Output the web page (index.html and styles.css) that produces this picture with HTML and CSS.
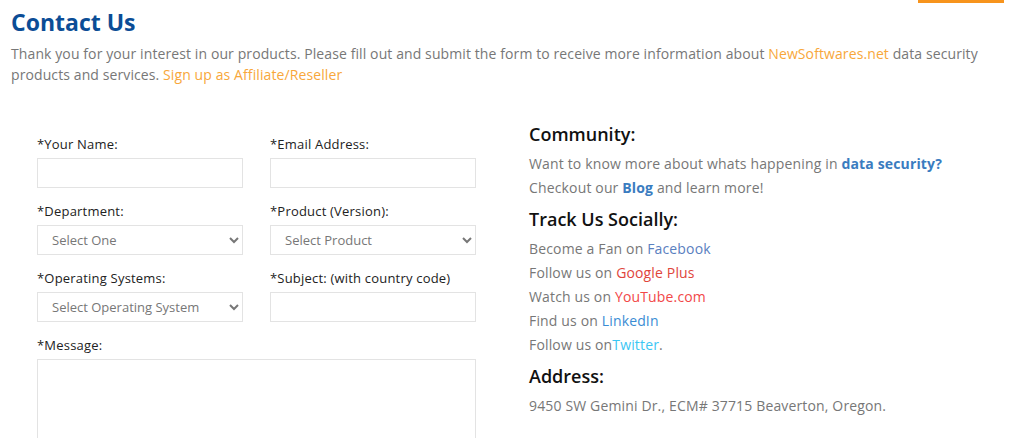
FILE: index.html
```html
<!DOCTYPE html>
<html lang="en">
<head>
<meta charset="utf-8">
<title>Contact Us</title>
<link rel="stylesheet" href="styles.css">
</head>
<body>
<div class="accent-bar"></div>
<div class="page">
  <h1 class="title">Contact Us</h1>
  <p class="intro"><span>Thank you for your interest in our products. Please fill out and submit the form to receive more information about </span><a class="orange" href="#">NewSoftwares.net</a><span> data security</span><br><span>products and services. </span><a class="orange" href="#">Sign up as Affiliate/Reseller</a></p>

  <div class="main">
    <form class="form">
      <div class="field">
        <label class="label">*Your Name:</label>
        <input class="control" type="text">
      </div>
      <div class="field">
        <label class="label">*Email Address:</label>
        <input class="control" type="text">
      </div>
      <div class="field">
        <label class="label">*Department:</label>
        <select class="control select"><option>Select One</option></select>
      </div>
      <div class="field">
        <label class="label">*Product (Version):</label>
        <select class="control select"><option>Select Product</option></select>
      </div>
      <div class="field">
        <label class="label">*Operating Systems:</label>
        <select class="control select"><option>Select Operating System</option></select>
      </div>
      <div class="field">
        <label class="label">*Subject: (with country code)</label>
        <input class="control" type="text">
      </div>
      <div class="field wide">
        <label class="label">*Message:</label>
        <textarea class="control area"></textarea>
      </div>
    </form>

    <aside class="side">
      <h3 class="side-title">Community:</h3>
      <p class="line">Want to know more about whats happening in <a class="strong-link" href="#">data security?</a></p>
      <p class="line">Checkout our <a class="strong-link" href="#">Blog</a> and learn more!</p>

      <h3 class="side-title gap">Track Us Socially:</h3>
      <p class="line">Become a Fan on <a class="fb" href="#">Facebook</a></p>
      <p class="line">Follow us on <a class="gp" href="#">Google Plus</a></p>
      <p class="line">Watch us on <a class="yt" href="#">YouTube.com</a></p>
      <p class="line">Find us on <a class="li" href="#">LinkedIn</a></p>
      <p class="line">Follow us on<a class="tw" href="#">Twitter</a>.</p>

      <h3 class="side-title gap">Address:</h3>
      <p class="line">9450 SW Gemini Dr., ECM# 37715 Beaverton, Oregon.</p>
    </aside>
  </div>
</div>
</body>
</html>
```

FILE: styles.css
```css
* { box-sizing: border-box; }

html, body {
  margin: 0;
  background: #fff;
  font-family: "Open Sans", "DejaVu Sans", sans-serif;
  overflow: hidden;
}

.accent-bar {
  position: absolute;
  top: 0;
  left: 918px;
  width: 86px;
  height: 3px;
  background: #f7941d;
}

.page {
  padding: 0 11px;
}

.title {
  margin: 0;
  padding-top: 6px;
  font-size: 23px;
  line-height: 32px;
  font-weight: 700;
  color: #0b4d96;
}

.intro {
  margin: 5px 0 0;
  font-size: 14px;
  line-height: 21px;
  letter-spacing: 0.1px;
  color: #777;
}

a { text-decoration: none; }

.orange { color: #f8a73a; }

.main {
  display: grid;
  grid-template-columns: 439px 1fr;
  column-gap: 53px;
  margin-top: 36px;
  padding-left: 26px;
  align-items: start;
}

.form {
  display: grid;
  grid-template-columns: 206px 206px;
  column-gap: 27px;
  row-gap: 13px;
  padding-top: 13px;
}

.field { display: flex; flex-direction: column; }
.field.wide { grid-column: 1 / 3; }

.label {
  font-size: 13px;
  line-height: 20px;
  letter-spacing: 0.2px;
  color: #222;
  margin-bottom: 4px;
}

.control {
  height: 30px;
  width: 100%;
  border: 1px solid #e3e3e3;
  background: #fff;
  font-family: inherit;
  font-size: 13px;
  color: #777;
  border-radius: 0;
  outline: none;
}

.select {
  padding: 0 10px;
}

.area {
  height: 120px;
  resize: none;
}

.side-title {
  margin: 0 0 5px;
  font-size: 18px;
  line-height: 26px;
  font-weight: 600;
  color: #111;
}

.side-title.gap { margin-top: 6px; }

.line {
  margin: 0;
  font-size: 14px;
  line-height: 24px;
  letter-spacing: 0.15px;
  color: #777;
}

.strong-link { color: #3a7cc0; font-weight: 700; }
.fb { color: #5a80c0; }
.gp { color: #e0453c; }
.yt { color: #f24848; }
.li { color: #3a8cd4; }
.tw { color: #3cc6f4; }
```
